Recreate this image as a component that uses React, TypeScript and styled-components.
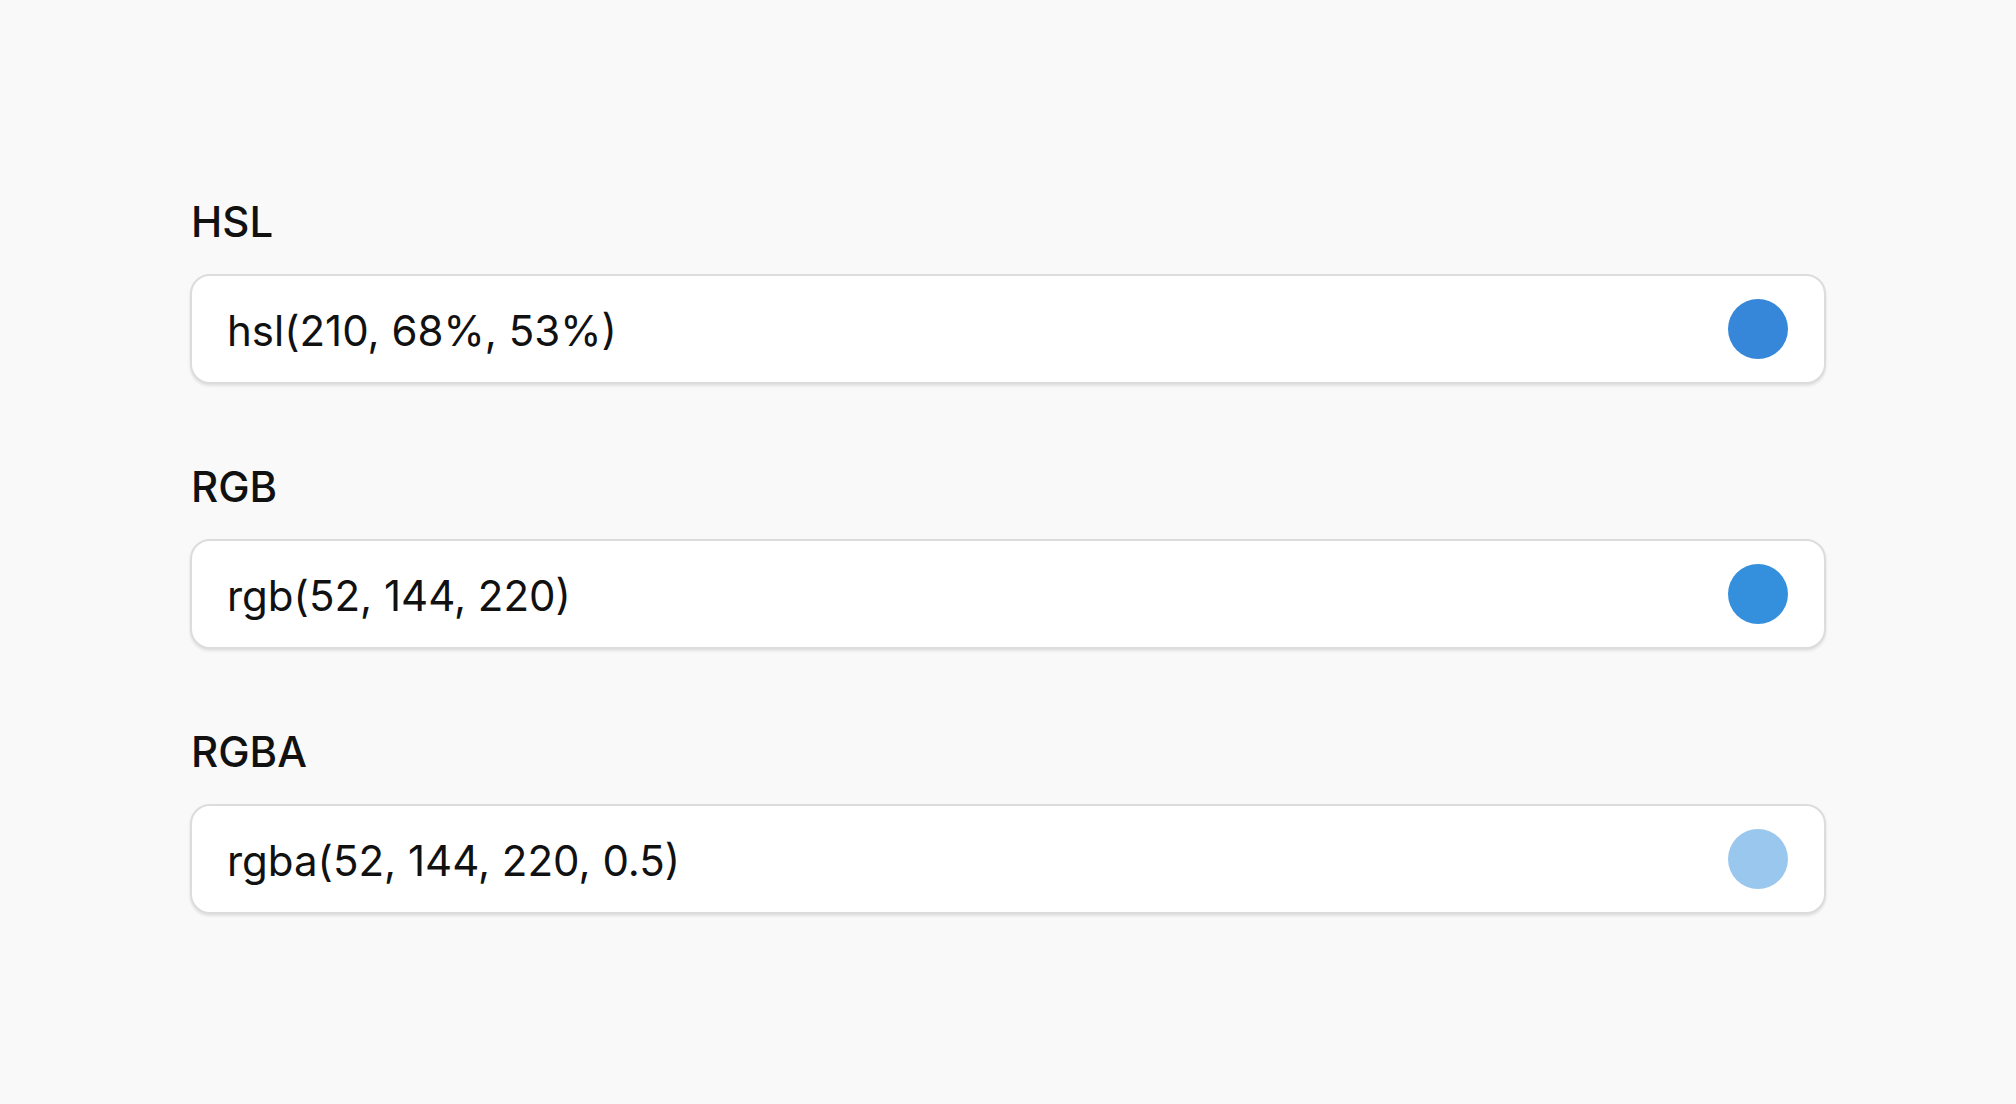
import styled, { createGlobalStyle } from 'styled-components';

const GlobalStyle = createGlobalStyle`
    html, body {
        margin: 0;
        padding: 0;
        background-color: #f9f9f9;
        font-family: Inter, "Noto Sans", sans-serif;
        color: #111111;
    }
`;

const Page = styled.main`
    min-height: 1104px;
    box-sizing: border-box;
    padding: 197px 190px 0 190px;
    display: flex;
    flex-direction: column;
    gap: 78px;
`;

const Field = styled.section`
    display: flex;
    flex-direction: column;
    gap: 27px;
`;

const Label = styled.label`
    font-size: 42px;
    font-weight: 500;
    line-height: 50px;
    padding-left: 1px;
    color: #111111;
`;

const ValueBox = styled.div`
    height: 110px;
    box-sizing: border-box;
    display: flex;
    align-items: center;
    justify-content: space-between;
    padding: 0 36px 0 35px;
    background-color: #ffffff;
    border: 2px solid #dcdcdc;
    border-radius: 20px;
    box-shadow: 0 2px 3px rgba(0, 0, 0, 0.1);
`;

const ValueText = styled.span`
    font-size: 42px;
    line-height: 50px;
    padding-top: 3px;
    color: #111111;
`;

const Swatch = styled.span<{ color: string }>`
    width: 60px;
    height: 60px;
    border-radius: 50%;
    background-color: ${(props) => props.color};
    flex-shrink: 0;
`;

const formats = [
    { label: 'HSL', value: 'hsl(210, 68%, 53%)' },
    { label: 'RGB', value: 'rgb(52, 144, 220)' },
    { label: 'RGBA', value: 'rgba(52, 144, 220, 0.5)' },
];

export default function App() {
    return (
        <>
            <GlobalStyle />
            <Page>
                {formats.map((f) => (
                    <Field key={f.label}>
                        <Label>{f.label}</Label>
                        <ValueBox>
                            <ValueText>{f.value}</ValueText>
                            <Swatch color={f.value} />
                        </ValueBox>
                    </Field>
                ))}
            </Page>
        </>
    );
}
